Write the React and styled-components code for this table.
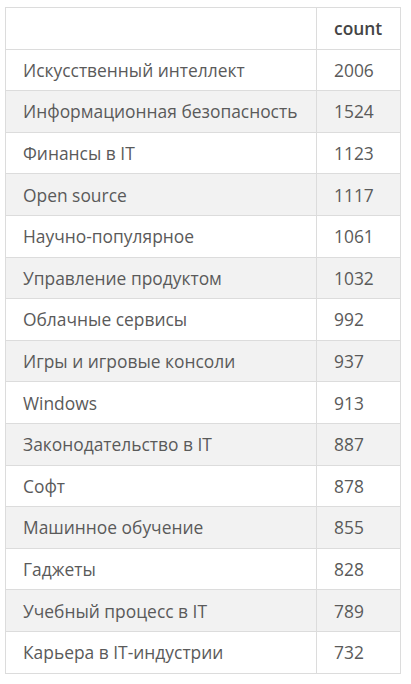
import React from "react";
import styled, { createGlobalStyle } from "styled-components";

const GlobalStyle = createGlobalStyle`
  body {
    margin: 0;
    background: #fff;
    font-family: "Open Sans", "Liberation Sans", sans-serif;
  }
`;

const Wrapper = styled.div`
  padding: 7px 10px 0 5px;
`;

const Table = styled.table`
  border-collapse: collapse;
  table-layout: fixed;
  width: 396px;
  font-size: 17.4px;
  color: #555;
`;

const Row = styled.tr`
  background: ${(props) => (props.striped ? "#f2f2f2" : "#fff")};
`;

const Cell = styled.td`
  border: 1px solid #dcdcdc;
  height: 40.6px;
  padding: 0 17px;
  white-space: nowrap;
  text-align: left;
  width: ${(props) => (props.num ? "49px" : "auto")};
  color: ${(props) => (props.head ? "#444" : "#5a5a5a")};
  font-weight: ${(props) => (props.head ? 600 : 400)};
`;

const data = [
  ["Искусственный интеллект", 2006],
  ["Информационная безопасность", 1524],
  ["Финансы в IT", 1123],
  ["Open source", 1117],
  ["Научно-популярное", 1061],
  ["Управление продуктом", 1032],
  ["Облачные сервисы", 992],
  ["Игры и игровые консоли", 937],
  ["Windows", 913],
  ["Законодательство в IT", 887],
  ["Софт", 878],
  ["Машинное обучение", 855],
  ["Гаджеты", 828],
  ["Учебный процесс в IT", 789],
  ["Карьера в IT-индустрии", 732],
];

export default function App() {
  return (
    <Wrapper>
      <GlobalStyle />
      <Table>
        <thead>
          <Row>
            <Cell as="th" head />
            <Cell as="th" head num>
              count
            </Cell>
          </Row>
        </thead>
        <tbody>
          {data.map(([name, count], i) => (
            <Row key={name} striped={i % 2 === 1}>
              <Cell>{name}</Cell>
              <Cell num>{count}</Cell>
            </Row>
          ))}
        </tbody>
      </Table>
    </Wrapper>
  );
}
